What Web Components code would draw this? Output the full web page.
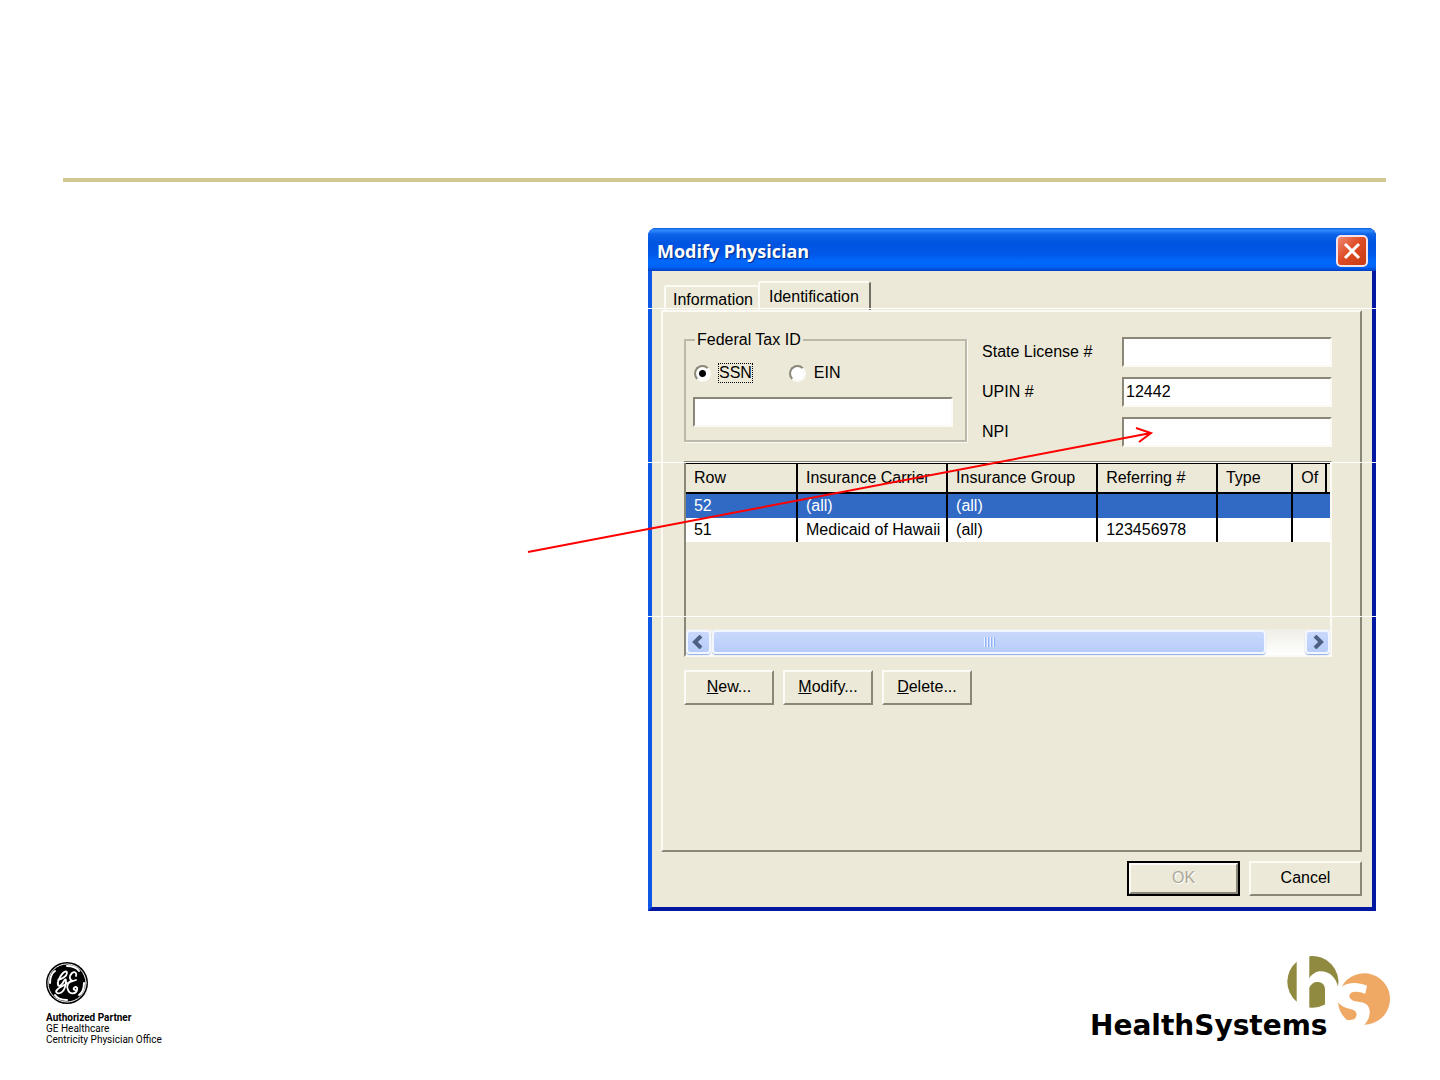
<!DOCTYPE html>
<html lang="en">
<head>
<meta charset="utf-8">
<title>Modify Physician</title>
<style>
  :root {
    --face: #ece9d8;
    --light: #fbfaf4;
    --shade: #aca899;
    --edge: #8a8778;
    --dark: #716f64;
    --select: #316ac5;
    --rule: #d3c88f;
  }
  body {
    margin: 0;
    background: #fff;
    color: #000;
    font: 16px/18px "Liberation Sans", Arial, sans-serif;
  }
</style>
</head>
<body>
<slide-page>
  <xp-dialog heading="Modify Physician">
    <xp-tabs>
      <div class="top" slot="top">
        <tax-id-group></tax-id-group>
        <id-fields>
          <xp-field label="State License #"></xp-field>
          <xp-field label="UPIN #" value="12442"></xp-field>
          <xp-field label="NPI"></xp-field>
        </id-fields>
      </div>
      <insurance-list></insurance-list>
      <xp-button slot="actions"><u>N</u>ew...</xp-button>
      <xp-button slot="actions"><u>M</u>odify...</xp-button>
      <xp-button slot="actions"><u>D</u>elete...</xp-button>
    </xp-tabs>
    <xp-button slot="buttons" wide disabled>OK</xp-button>
    <xp-button slot="buttons" wide>Cancel</xp-button>
    <callout-arrow slot="overlay"></callout-arrow>
  </xp-dialog>
  <partner-mark slot="footer"></partner-mark>
  <brand-mark slot="footer"></brand-mark>
</slide-page>

<script>
// Attaches an open shadow root and fills it
class BaseElement extends HTMLElement {
  constructor() {
    super();
    this.attachShadow({ mode: 'open' });
  }
  connectedCallback() {
    this.shadowRoot.innerHTML = this.render();
  }
}

class SlidePage extends BaseElement {
  render() {
    return /*html*/`
      <style>
        :host {
          display: flex;
          flex-direction: column;
          min-height: 100vh;
          box-sizing: border-box;
        }
        header {
          height: 178px;
          margin: 0 54px 0 63px;
          border-bottom: 4px solid var(--rule);
        }
        main {
          display: flex;
          justify-content: flex-end;
          padding: 46px 64px 0 63px;
        }
        footer {
          display: flex;
          justify-content: space-between;
          padding: 45px 50px 0 46px;
        }
      </style>
      <header></header>
      <main><slot></slot></main>
      <footer><slot name="footer"></slot></footer>
    `;
  }
}
customElements.define('slide-page', SlidePage);

class XpDialog extends BaseElement {
  render() {
    return /*html*/`
      <style>
        :host {
          display: block;
          position: relative;
          width: 55.45%;
        }
        .frame {
          border: 4px solid #0f57e6;
          border-top: 0;
          border-right-color: #0019a0;
          border-bottom: 4px solid #0019a0;
          border-radius: 8px 8px 0 0;
          background: #0f57e6;
        }
        .title {
          display: flex;
          align-items: center;
          justify-content: space-between;
          height: 43px;
          margin: 0 -4px;
          padding: 3px 8px 0 9px;
          box-sizing: border-box;
          border-radius: 8px 8px 0 0;
          background: linear-gradient(#0a5be0 0, #2f8cff 5%, #0c62e8 15%, #0054e0 35%, #0057e8 60%, #0068fb 78%, #0064f6 90%, #0040c4 100%);
        }
        h1 {
          margin: 0;
          color: #fff;
          font: bold 18px/24px "Open Sans", sans-serif;
          text-shadow: 1px 1px 1px #002a88;
        }
        .close {
          width: 32px;
          height: 32px;
          padding: 0;
          border: 2px solid #f4e3e8;
          border-radius: 5px;
          background: linear-gradient(135deg, #ee8a72, #df4c26 45%, #c63a12);
        }
        .close svg { display: block; margin: auto; }
        .body {
          padding: 10px 10px 11px 9px;
          background: var(--face);
        }
        .buttons {
          display: flex;
          justify-content: flex-end;
          gap: 9px;
          padding-top: 9px;
        }
        /* hairlines that run across the window */
        .seams {
          position: absolute;
          inset: 80px 0 auto 0;
          height: 309px;
          background: repeating-linear-gradient(#fff 0 1px, transparent 1px 154px);
          pointer-events: none;
        }
      </style>
      <section class="frame">
        <div class="title">
          <h1>${this.getAttribute('heading')}</h1>
          <button class="close" aria-label="Close">
            <svg width="20" height="20" viewBox="0 0 20 20" fill="none" stroke="#fff" stroke-width="3"><path d="M3 3l14 14M17 3L3 17"/></svg>
          </button>
        </div>
        <div class="body">
          <slot></slot>
          <div class="buttons"><slot name="buttons"></slot></div>
        </div>
      </section>
      <div class="seams"></div>
      <slot name="overlay"></slot>
    `;
  }
}
customElements.define('xp-dialog', XpDialog);

class XpTabs extends BaseElement {
  render() {
    return /*html*/`
      <style>
        :host { display: block; }
        nav {
          display: flex;
          align-items: flex-end;
          padding-left: 3px;
        }
        button {
          height: 25px;
          padding: 2px 5px 0 7px;
          border: 0;
          border-top: 2px solid var(--light);
          border-left: 2px solid var(--light);
          border-radius: 3px 3px 0 0;
          background: var(--face);
          color: #000;
          font: inherit;
        }
        button[aria-selected="true"] {
          height: 29px;
          padding: 0 10px 0 9px;
          border-right: 2px solid var(--dark);
        }
        .panel {
          min-height: 542px;
          box-sizing: border-box;
          padding: 19px 28px 0 21px;
          border: 2px solid;
          border-color: var(--light) var(--edge) var(--edge) var(--light);
        }
        ::slotted([slot="top"]) {
          display: flex;
          justify-content: space-between;
        }
        .actions {
          display: flex;
          gap: 9px;
          padding-top: 13px;
        }
      </style>
      <nav role="tablist">
        <button role="tab" aria-selected="false">Information</button>
        <button role="tab" aria-selected="true">Identification</button>
      </nav>
      <div class="panel" role="tabpanel">
        <slot name="top"></slot>
        <slot></slot>
        <div class="actions"><slot name="actions"></slot></div>
      </div>
    `;
  }
}
customElements.define('xp-tabs', XpTabs);

// Shared look of the sunken text boxes
const inputStyles = /*css*/`
  input[type="text"] {
    width: 100%;
    height: 30px;
    box-sizing: border-box;
    padding: 0 2px;
    border: 2px solid;
    border-color: var(--edge) var(--light) var(--light) var(--edge);
    border-radius: 0;
    outline: 0;
    background: #fff;
    color: #000;
    font: inherit;
  }
`;

class TaxIdGroup extends BaseElement {
  render() {
    return /*html*/`
      <style>
        ${inputStyles}
        :host { display: block; width: 43.6%; }
        fieldset {
          margin: 0;
          padding: 14px 12px 13px 7px;
          border: 2px solid #bcb9aa;
          box-shadow: 1px 1px 0 var(--light);
        }
        legend { margin-left: 2px; padding: 0 2px; }
        .radios {
          display: flex;
          gap: 35px;
          padding-bottom: 14px;
        }
        label { display: flex; align-items: center; gap: 7px; }
        span { border: 1px solid transparent; }
        input:checked + span { border: 1px dotted #000; }
        input[type="radio"] {
          appearance: none;
          width: 17px;
          height: 17px;
          margin: 0 0 0 1px;
          border: 2px solid;
          border-color: var(--edge) var(--light) var(--light) var(--edge);
          border-radius: 50%;
          background: #fff;
        }
        input[type="radio"]:checked {
          background: radial-gradient(circle, #000 3px, #fff 4px);
        }
      </style>
      <fieldset>
        <legend>Federal Tax ID</legend>
        <div class="radios">
          <label><input type="radio" name="kind" checked><span>SSN</span></label>
          <label><input type="radio" name="kind"><span>EIN</span></label>
        </div>
        <input type="text" aria-label="Federal Tax ID">
      </fieldset>
    `;
  }
}
customElements.define('tax-id-group', TaxIdGroup);

class IdFields extends BaseElement {
  render() {
    return /*html*/`
      <style>
        :host {
          display: flex;
          flex-direction: column;
          gap: 10px;
          width: 54%;
          padding-top: 6px;
        }
      </style>
      <slot></slot>
    `;
  }
}
customElements.define('id-fields', IdFields);

class XpField extends BaseElement {
  render() {
    return /*html*/`
      <style>
        ${inputStyles}
        :host {
          display: grid;
          grid-template-columns: 2fr 3fr;
          align-items: center;
        }
      </style>
      <label for="box">${this.getAttribute('label')}</label>
      <input type="text" id="box" value="${this.getAttribute('value') || ''}">
    `;
  }
}
customElements.define('xp-field', XpField);

class InsuranceList extends BaseElement {
  render() {
    const heads = ['Row', 'Insurance Carrier', 'Insurance Group', 'Referring #', 'Type', 'Of'];
    const rows = [
      ['52', '(all)', '(all)', '', '', ''],
      ['51', 'Medicaid of Hawaii', '(all)', '123456978', '', '']
    ];
    return /*html*/`
      <style>
        :host {
          display: flex;
          flex-direction: column;
          justify-content: space-between;
          min-height: 196px;
          box-sizing: border-box;
          margin-top: 14px;
          border: 2px solid;
          border-color: var(--edge) var(--light) var(--light) var(--edge);
        }
        table {
          width: 100%;
          border-collapse: separate;
          border-spacing: 0;
          table-layout: fixed;
        }
        th, td {
          padding: 0 0 0 8px;
          border-right: 2px solid #000;
          box-sizing: border-box;
          font-weight: normal;
          text-align: left;
          white-space: nowrap;
        }
        th {
          height: 31px;
          border-bottom: 2px solid #000;
          border-top: 1px solid #000;
        }
        th:last-child {
          border-right: 0;
          background: linear-gradient(to left, transparent 3px, #000 3px 5px, transparent 5px);
        }
        td { height: 24px; background: #fff; }
        td:last-child { border-right: 0; }
        tr.selected td { background: var(--select); color: #fff; }
        .scroll {
          display: flex;
          align-items: center;
          height: 26px;
          background: linear-gradient(#efeee6, #fff);
        }
        .scroll button, .thumb {
          height: 24px;
          box-sizing: border-box;
          border: 2px solid #f3f6ff;
          border-radius: 4px;
          background: linear-gradient(#cad8fc, #b7cdfa);
          box-shadow: 0 1px 1px #8eaee0;
        }
        .scroll button { width: 25px; padding: 0; }
        .scroll svg { display: block; margin: auto; }
        .track { flex: 1; padding: 0 6% 0 1px; }
        .thumb { display: flex; align-items: center; justify-content: center; gap: 2px; }
        .thumb i { width: 1px; height: 10px; background: #eef4fe; box-shadow: 1px 0 0 #8cb0f8; }
      </style>
      <table>
        <colgroup>
          <col style="width: 17.4%"><col style="width: 23.3%"><col style="width: 23.3%">
          <col style="width: 18.6%"><col style="width: 11.7%"><col>
        </colgroup>
        <thead><tr>${heads.map(h => `<th>${h}</th>`).join('')}</tr></thead>
        <tbody>
          ${rows.map((row, i) => `<tr class="${i == 0 ? 'selected' : ''}">${row.map(c => `<td>${c}</td>`).join('')}</tr>`).join('')}
        </tbody>
      </table>
      <div class="scroll">
        <button aria-label="Scroll left"><svg width="12" height="14" viewBox="0 0 12 14" fill="none" stroke="#4d6185" stroke-width="4"><path d="M9 1L3 7l6 6"/></svg></button>
        <div class="track"><div class="thumb"><i></i><i></i><i></i><i></i></div></div>
        <button aria-label="Scroll right"><svg width="12" height="14" viewBox="0 0 12 14" fill="none" stroke="#4d6185" stroke-width="4"><path d="M3 1l6 6-6 6"/></svg></button>
      </div>
    `;
  }
}
customElements.define('insurance-list', InsuranceList);

class XpButton extends BaseElement {
  render() {
    return /*html*/`
      <style>
        :host { display: block; }
        button {
          min-width: 90px;
          height: 35px;
          padding: 0 8px 2px;
          border: 2px solid;
          border-color: var(--light) var(--edge) var(--edge) var(--light);
          background: var(--face);
          color: #000;
          font: inherit;
        }
        :host([wide]) button { min-width: 113px; }
        button:disabled {
          outline: 2px solid #000;
          outline-offset: -2px;
          border-width: 4px;
          color: var(--shade);
          text-shadow: 1px 1px 0 #fff;
        }
      </style>
      <button ${this.hasAttribute('disabled') ? 'disabled' : ''}><slot></slot></button>
    `;
  }
}
customElements.define('xp-button', XpButton);

class CalloutArrow extends BaseElement {
  render() {
    // starts left of the window and points at the NPI box
    return /*html*/`
      <style>
        :host {
          position: absolute;
          top: 195px;
          left: -122px;
          pointer-events: none;
        }
        svg { display: block; }
      </style>
      <svg width="640" height="140" viewBox="0 0 640 140" fill="none" stroke="#f00" stroke-width="2">
        <path d="M2 129L625 10M610 5l15 5-12 9"/>
      </svg>
    `;
  }
}
customElements.define('callout-arrow', CalloutArrow);

class PartnerMark extends BaseElement {
  render() {
    return /*html*/`
      <style>
        :host { display: block; padding-top: 6px; font: 10px/11px Roboto, sans-serif; }
        svg { display: block; margin-bottom: 8px; }
        p { margin: 0; }
      </style>
      <svg width="42" height="42" viewBox="0 0 42 42" fill="none" stroke="#fff" stroke-linecap="round">
        <circle cx="21" cy="21" r="21" fill="#000" stroke="none"/>
        <circle cx="21" cy="21" r="19" stroke-width="1"/>
        <path stroke-width="2" d="M21 4C27 4 31 6 33 9M38 21C38 27 36 31 33 33M21 38C15 38 11 36 9 33M4 21C4 15 6 11 9 9"/>
        <path stroke-width="1.8" d="M12 18c4-1 9-4 9-7 0-2-2-2-4 0-3 3-6 9-5 12 1 2 4 0 6-4 1-2 2-2 2 0 0 5-2 11-6 12-3 1-5-1-3-3 2-3 7-4 10-7"/>
        <path stroke-width="1.8" d="M30 14c1-3-1-5-4-3-3 3-3 7 1 8-5 0-7 5-5 9 2 5 8 4 9 0 1-3-2-4-3-2-1 1 0 2 1 2M27 19l3-1"/>
      </svg>
      <p><b>Authorized Partner</b></p>
      <p>GE Healthcare</p>
      <p>Centricity Physician Office</p>
    `;
  }
}
customElements.define('partner-mark', PartnerMark);

class BrandMark extends BaseElement {
  render() {
    return /*html*/`
      <style>
        :host { display: block; }
        svg { display: block; overflow: visible; }
        text { font: bold 28px "DejaVu Sans", sans-serif; }
      </style>
      <svg width="300" height="90" viewBox="0 0 300 90">
        <g fill="#8f8a40">
          <path d="M206.7 5.7A26 26 0 0 0 206.7 45.7Z"/>
          <path d="M219.3.3A25.8 25.8 0 0 1 248 30.7C246 22 240 15.3 230.7 15.3C226 15.3 222 18 219.3 22.3Z"/>
          <path d="M219.3 31.7C221 28 224 26 227 26C232 26 235 28.5 235 34V48.5A26 26 0 0 1 219.3 51.5Z"/>
        </g>
        <g fill="#f0a964">
          <path d="M251.7 30.7A25.7 25.7 0 1 1 274.3 68.7C278 65 279.7 61 279.7 56C279.7 50 276 47 271 46.3L264 45C258 43 258 37 263.3 36C267 35.3 271 36 275.3 37.7L277 29.7C268 26 258 26 251.7 30.7Z"/>
          <path d="M248 46.3C251 50 255 52 262 53.5C268 55 267.5 61 264 63.3C262 64.3 259 64.2 256.7 63.7A25.7 25.7 0 0 1 248 46.3Z"/>
        </g>
        <text x="0" y="79">HealthSystems</text>
      </svg>
    `;
  }
}
customElements.define('brand-mark', BrandMark);
</script>
</body>
</html>
